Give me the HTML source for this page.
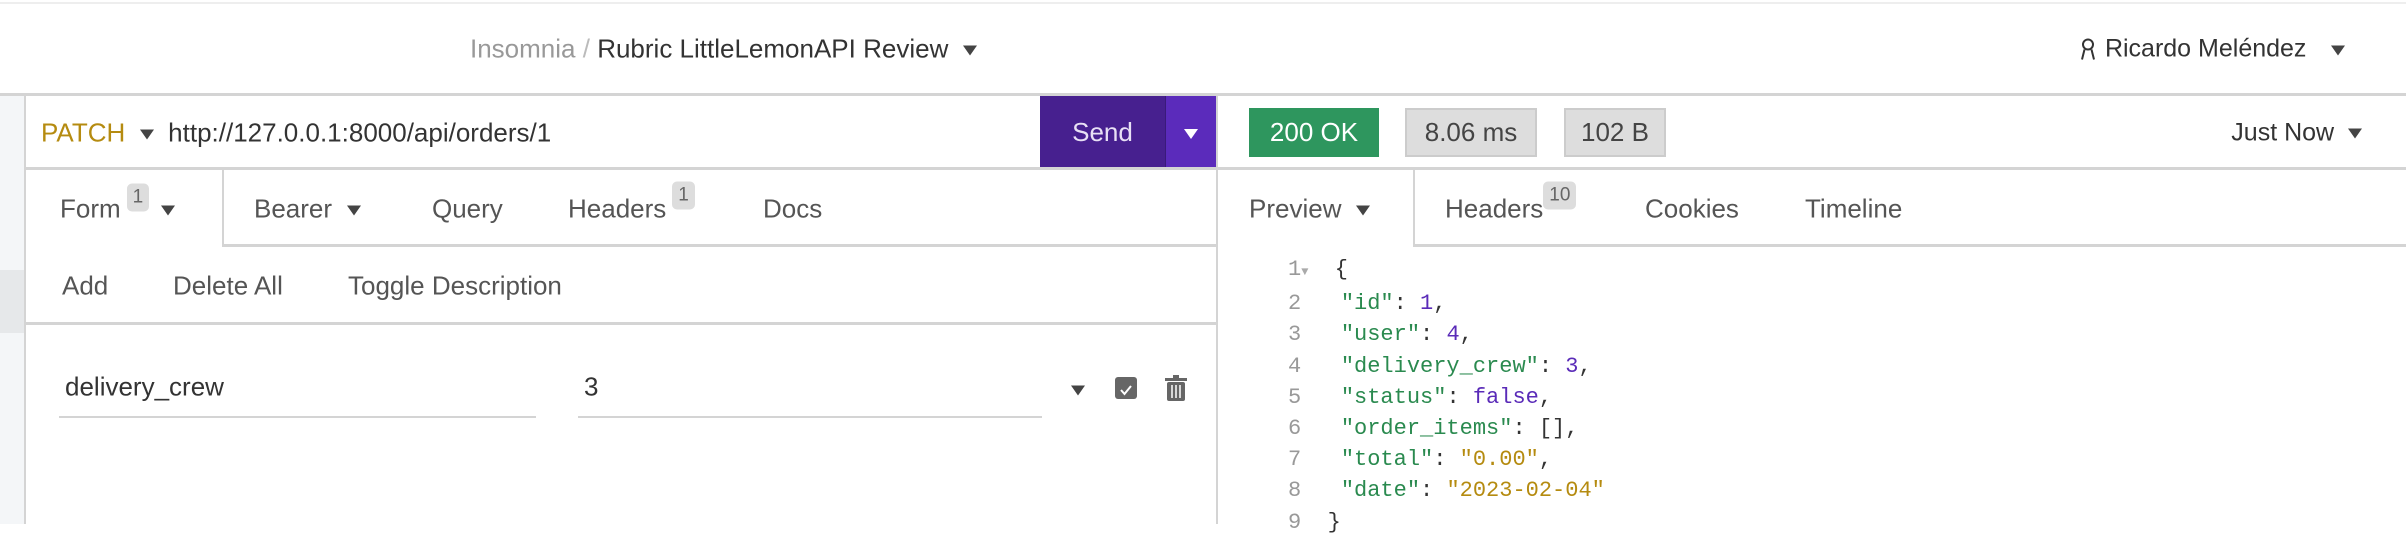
<!DOCTYPE html>
<html><head><meta charset="utf-8"><style>
*{margin:0;padding:0;box-sizing:border-box}
body{width:2406px;height:524px;background:#fff;position:relative;overflow:hidden;font-family:"Liberation Sans",sans-serif;color:#333;font-size:26px}
.a{position:absolute;white-space:nowrap}
.tri{display:inline-block;width:0;height:0;border-left:7px solid transparent;border-right:7px solid transparent;border-top:10px solid #444;vertical-align:middle}
.hl{position:absolute;height:3px;background:#d4d4d4}
.vl{position:absolute;width:2px;background:#d4d4d4}
.mid{transform:translateY(-50%)}
.g{color:#555}
.badge{display:inline-block;background:#ddd;border-radius:5px;font-size:19px;padding:3px 6px;vertical-align:top;color:#666;line-height:22px}
.code{font-family:"Liberation Mono",monospace;font-size:22px}
.k{color:#2a8a4f}.n{color:#5a2bb8}.s{color:#b58b10}.ln{color:#999}
</style></head><body>
<div class="hl" style="left:0;top:2px;width:2406px;height:2px;background:#eee"></div>
<div class="a mid" style="left:470px;top:49px"><span style="color:#999">Insomnia</span> <span style="color:#bbb">/</span> Rubric LittleLemonAPI Review &nbsp;<span class="tri"></span></div>
<div class="a mid" style="left:2078px;top:49px;font-size:25px"><svg width="20" height="24" viewBox="0 0 20 24" style="vertical-align:middle"><circle cx="10" cy="7" r="5" fill="none" stroke="#333" stroke-width="2"/><path d="M4 22 L6.5 12 M16 22 L13.5 12" stroke="#333" stroke-width="2" fill="none"/></svg> Ricardo Meléndez</div>
<div class="a mid" style="left:2331px;top:49px"><span class="tri"></span></div>
<div class="hl" style="left:0;top:93px;width:2406px"></div>
<div class="a" style="left:0;top:96px;width:26px;height:428px;background:#f4f6f8;border-right:2px solid #d4d4d4"></div>
<div class="a" style="left:0;top:270px;width:24px;height:63px;background:#e6e8ea"></div>
<div class="a mid" style="left:41px;top:133px"><span style="color:#b58b10">PATCH</span>&nbsp; <span class="tri"></span>&nbsp; http://127.0.0.1:8000/api/orders/1</div>
<div class="a" style="left:1040px;top:96px;width:125px;height:72px;background:#47208f;color:#e8e0f5;text-align:center;line-height:72px">Send</div>
<div class="a" style="left:1165px;top:96px;width:51px;height:72px;background:#5b2bbb;border-left:1px solid #3a1a7a;text-align:center;line-height:72px"><span class="tri" style="border-top-color:#fff"></span></div>
<div class="hl" style="left:26px;top:167px;width:2380px"></div>
<div class="vl" style="left:222px;top:170px;height:76px"></div>
<div class="hl" style="left:222px;top:244px;width:994px"></div>
<div class="a mid g" style="left:60px;top:209px">Form<span class="badge" style="margin:0 12px 0 6px;transform:translateY(-10px)">1</span><span class="tri"></span></div>
<div class="a mid g" style="left:254px;top:209px">Bearer &nbsp;<span class="tri"></span></div>
<div class="a mid g" style="left:432px;top:209px">Query</div>
<div class="a mid g" style="left:568px;top:209px">Headers<span class="badge" style="margin-left:6px;transform:translateY(-12px)">1</span></div>
<div class="a mid g" style="left:763px;top:209px">Docs</div>
<div class="a mid g" style="left:62px;top:286px">Add</div>
<div class="a mid g" style="left:173px;top:286px">Delete All</div>
<div class="a mid g" style="left:348px;top:286px">Toggle Description</div>
<div class="hl" style="left:26px;top:322px;width:1190px"></div>
<div class="a mid" style="left:65px;top:387px">delivery_crew</div>
<div class="hl" style="left:59px;top:416px;width:477px;height:2px"></div>
<div class="a mid" style="left:584px;top:387px">3</div>
<div class="hl" style="left:578px;top:416px;width:464px;height:2px"></div>
<div class="a mid" style="left:1071px;top:389px"><span class="tri"></span></div>
<div class="a" style="left:1115px;top:377px;width:22px;height:22px;background:#666;border-radius:3px"><svg width="22" height="22"><path d="M6 11 L9.5 15 L16 7" stroke="#fff" stroke-width="2" fill="none"/></svg></div>
<svg class="a" style="left:1164px;top:374px" width="24" height="28" viewBox="0 0 24 28"><rect x="9" y="1" width="6" height="3" fill="#666"/><rect x="1" y="4" width="22" height="3" fill="#666"/><rect x="3" y="8" width="18" height="19" rx="2" fill="#666"/><path d="M8 11v13M12 11v13M16 11v13" stroke="#fff" stroke-width="1.5"/></svg>
<div class="vl" style="left:1216px;top:96px;height:428px"></div>
<div class="a" style="left:1249px;top:108px;width:130px;height:49px;background:#2e965e;color:#fff;text-align:center;line-height:49px">200 OK</div>
<div class="a" style="left:1405px;top:108px;width:132px;height:49px;background:#ddd;border:2px solid #ccc;text-align:center;line-height:45px;color:#444">8.06 ms</div>
<div class="a" style="left:1564px;top:108px;width:102px;height:49px;background:#ddd;border:2px solid #ccc;text-align:center;line-height:45px;color:#444">102 B</div>
<div class="a mid" style="right:44px;top:133px;font-size:25px">Just Now &nbsp;<span class="tri"></span></div>
<div class="vl" style="left:1413px;top:170px;height:76px"></div>
<div class="hl" style="left:1413px;top:244px;width:993px"></div>
<div class="a mid g" style="left:1249px;top:209px">Preview &nbsp;<span class="tri"></span></div>
<div class="a mid g" style="left:1445px;top:209px">Headers<span class="badge" style="transform:translateY(-12px)">10</span></div>
<div class="a mid g" style="left:1645px;top:209px">Cookies</div>
<div class="a mid g" style="left:1805px;top:209px">Timeline</div>
<div class="a code" style="left:1288px;top:254px;line-height:31.2px">
<div><span class="ln">1</span><span style="color:#aaa;font-size:12px">▼</span>&nbsp; {</div>
<div><span class="ln">2</span>&nbsp;&nbsp;&nbsp;<span class="k">"id"</span>: <span class="n">1</span>,</div>
<div><span class="ln">3</span>&nbsp;&nbsp;&nbsp;<span class="k">"user"</span>: <span class="n">4</span>,</div>
<div><span class="ln">4</span>&nbsp;&nbsp;&nbsp;<span class="k">"delivery_crew"</span>: <span class="n">3</span>,</div>
<div><span class="ln">5</span>&nbsp;&nbsp;&nbsp;<span class="k">"status"</span>: <span class="n">false</span>,</div>
<div><span class="ln">6</span>&nbsp;&nbsp;&nbsp;<span class="k">"order_items"</span>: [],</div>
<div><span class="ln">7</span>&nbsp;&nbsp;&nbsp;<span class="k">"total"</span>: <span class="s">"0.00"</span>,</div>
<div><span class="ln">8</span>&nbsp;&nbsp;&nbsp;<span class="k">"date"</span>: <span class="s">"2023-02-04"</span></div>
<div><span class="ln">9</span>&nbsp;&nbsp;}</div>
</div>
</body></html>
